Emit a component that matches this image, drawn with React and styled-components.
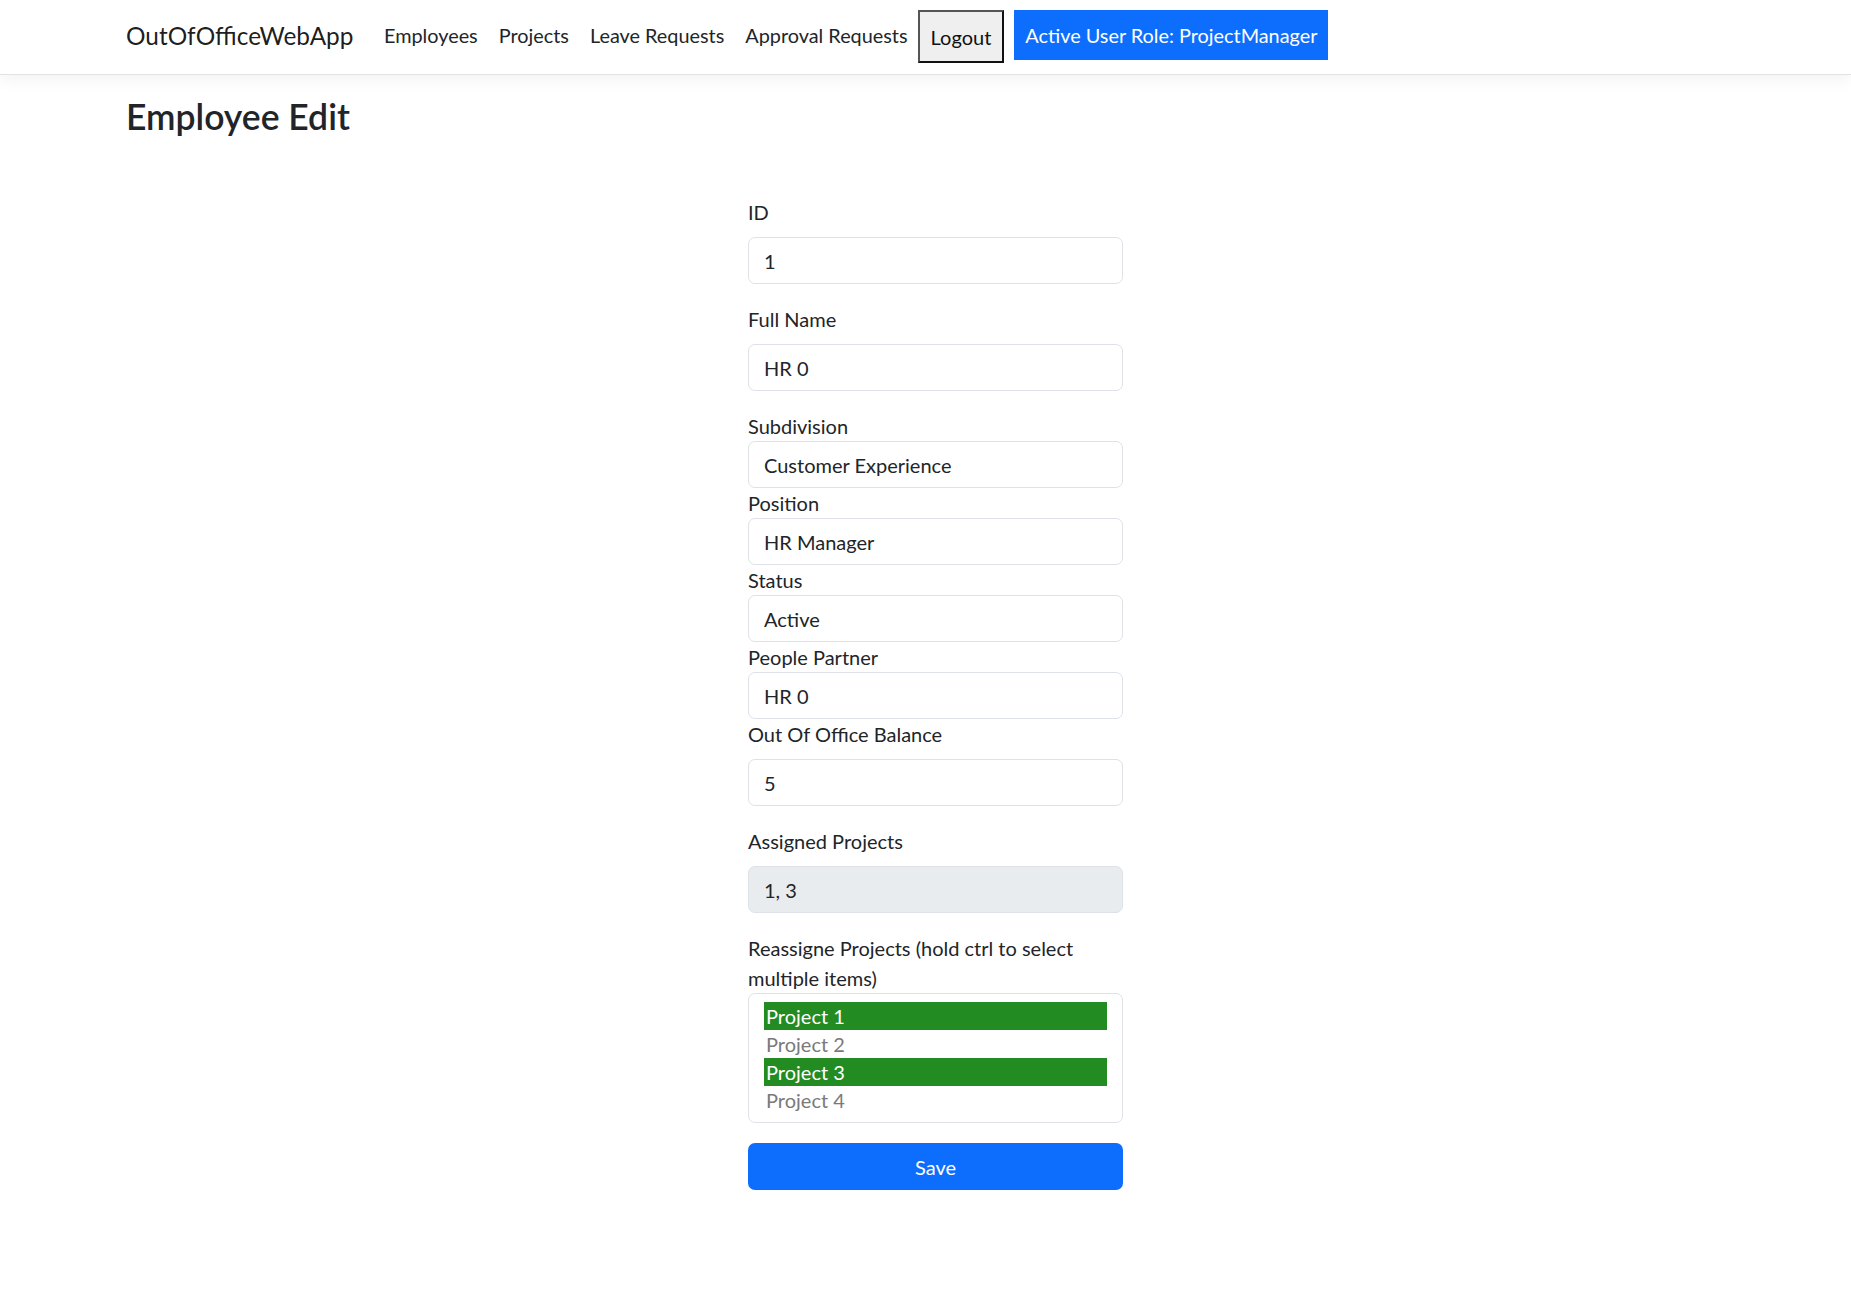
import React from "react";
import styled, { createGlobalStyle } from "styled-components";

const GlobalStyle = createGlobalStyle`
  * { box-sizing: border-box; }
  html, body { margin: 0; padding: 0; background: #ffffff; }
  body {
    font-family: Lato, "Open Sans", "Liberation Sans", sans-serif;
    color: #212529;
    font-size: 20px;
    line-height: 30px;
  }
`;

const Navbar = styled.header`
  height: 75px;
  border-bottom: 1px solid #e2e2e2;
  box-shadow: 0 5px 15px rgba(0, 0, 0, 0.05);
  background: #ffffff;
  padding: 10px 0 10px 126px;
  display: flex;
  align-items: flex-start;
`;

const Brand = styled.a`
  font-size: 24.4px;
  line-height: 37px;
  padding: 7px 0;
  margin-right: 20px;
  color: rgba(0, 0, 0, 0.9);
  text-decoration: none;
  white-space: nowrap;
`;

const NavList = styled.nav`
  display: flex;
  align-items: flex-start;
`;

const NavLink = styled.a`
  padding: 10px 10.5px;
  font-size: 19.85px;
  line-height: 30px;
  color: #212529;
  text-decoration: none;
  white-space: nowrap;
`;

const LogoutButton = styled.button`
  margin-left: -0.5px;
  height: 53px;
  padding: 0 11px;
  font-family: inherit;
  font-size: 20px;
  line-height: 30px;
  color: #111111;
  background: #efefef;
  border: 2px solid;
  border-color: #555555 #111111 #111111 #555555;
  border-radius: 0;
`;

const RoleButton = styled.button`
  margin-left: 10px;
  height: 50px;
  padding: 0 11px;
  font-family: inherit;
  font-size: 19.85px;
  line-height: 30px;
  color: #ffffff;
  background: #0d6efd;
  border: none;
  border-radius: 0;
  white-space: nowrap;
`;

const Main = styled.main`
  padding: 0 0 80px 126px;
`;

const Title = styled.h3`
  margin: 21px 0 0;
  font-size: 35.5px;
  line-height: 42px;
  font-weight: 600;
  color: #212529;
`;

const FormColumn = styled.form`
  width: 375px;
  margin: 59px 0 0 622px;
  display: flex;
  flex-direction: column;
`;

const Group = styled.div`
  margin-bottom: ${(p) => p.$mb || 0}px;
`;

const Label = styled.label`
  display: block;
  font-size: 20px;
  line-height: 30px;
  color: #212529;
  margin-bottom: ${(p) => p.$mb || 0}px;
`;

const Input = styled.input`
  display: block;
  width: 100%;
  height: 47px;
  padding: 0 15px;
  font-family: inherit;
  font-size: 20px;
  color: #212529;
  background: ${(p) => (p.disabled ? "#e9ecef" : "#ffffff")};
  border: 1px solid #dee2e6;
  border-radius: 7px;
  outline: none;
`;

const ListBox = styled.div`
  border: 1px solid #dee2e6;
  border-radius: 7px;
  padding: 8px 15px;
  background: #ffffff;
`;

const Option = styled.div`
  height: 28px;
  line-height: 28px;
  padding: 0 2px;
  font-size: 20px;
  color: ${(p) => (p.$selected ? "#ffffff" : "#7a7a7a")};
  background: ${(p) => (p.$selected ? "#228b22" : "transparent")};
`;

const SaveButton = styled.button`
  margin-top: 20px;
  height: 47px;
  width: 100%;
  font-family: inherit;
  font-size: 20px;
  color: #ffffff;
  background: #0d6efd;
  border: none;
  border-radius: 7px;
`;

const fields = [
  { label: "ID", value: "1", lmb: 10, gmb: 20 },
  { label: "Full Name", value: "HR 0", lmb: 10, gmb: 20 },
  { label: "Subdivision", value: "Customer Experience", lmb: 0, gmb: 0 },
  { label: "Position", value: "HR Manager", lmb: 0, gmb: 0 },
  { label: "Status", value: "Active", lmb: 0, gmb: 0 },
  { label: "People Partner", value: "HR 0", lmb: 0, gmb: 0 },
  { label: "Out Of Office Balance", value: "5", lmb: 10, gmb: 20 },
  { label: "Assigned Projects", value: "1, 3", lmb: 10, gmb: 20, disabled: true },
];

const projects = [
  { name: "Project 1", selected: true },
  { name: "Project 2", selected: false },
  { name: "Project 3", selected: true },
  { name: "Project 4", selected: false },
];

export default function App() {
  return (
    <>
      <GlobalStyle />
      <Navbar>
        <Brand href="#">OutOfOfficeWebApp</Brand>
        <NavList>
          <NavLink href="#">Employees</NavLink>
          <NavLink href="#">Projects</NavLink>
          <NavLink href="#">Leave Requests</NavLink>
          <NavLink href="#">Approval Requests</NavLink>
        </NavList>
        <LogoutButton type="button">Logout</LogoutButton>
        <RoleButton type="button">Active User Role: ProjectManager</RoleButton>
      </Navbar>
      <Main>
        <Title>Employee Edit</Title>
        <FormColumn onSubmit={(e) => e.preventDefault()}>
          {fields.map((f) => (
            <Group key={f.label} $mb={f.gmb}>
              <Label $mb={f.lmb}>{f.label}</Label>
              <Input defaultValue={f.value} disabled={f.disabled} readOnly />
            </Group>
          ))}
          <Group>
            <Label>Reassigne Projects (hold ctrl to select multiple items)</Label>
            <ListBox>
              {projects.map((p) => (
                <Option key={p.name} $selected={p.selected}>
                  {p.name}
                </Option>
              ))}
            </ListBox>
          </Group>
          <SaveButton type="submit">Save</SaveButton>
        </FormColumn>
      </Main>
    </>
  );
}
